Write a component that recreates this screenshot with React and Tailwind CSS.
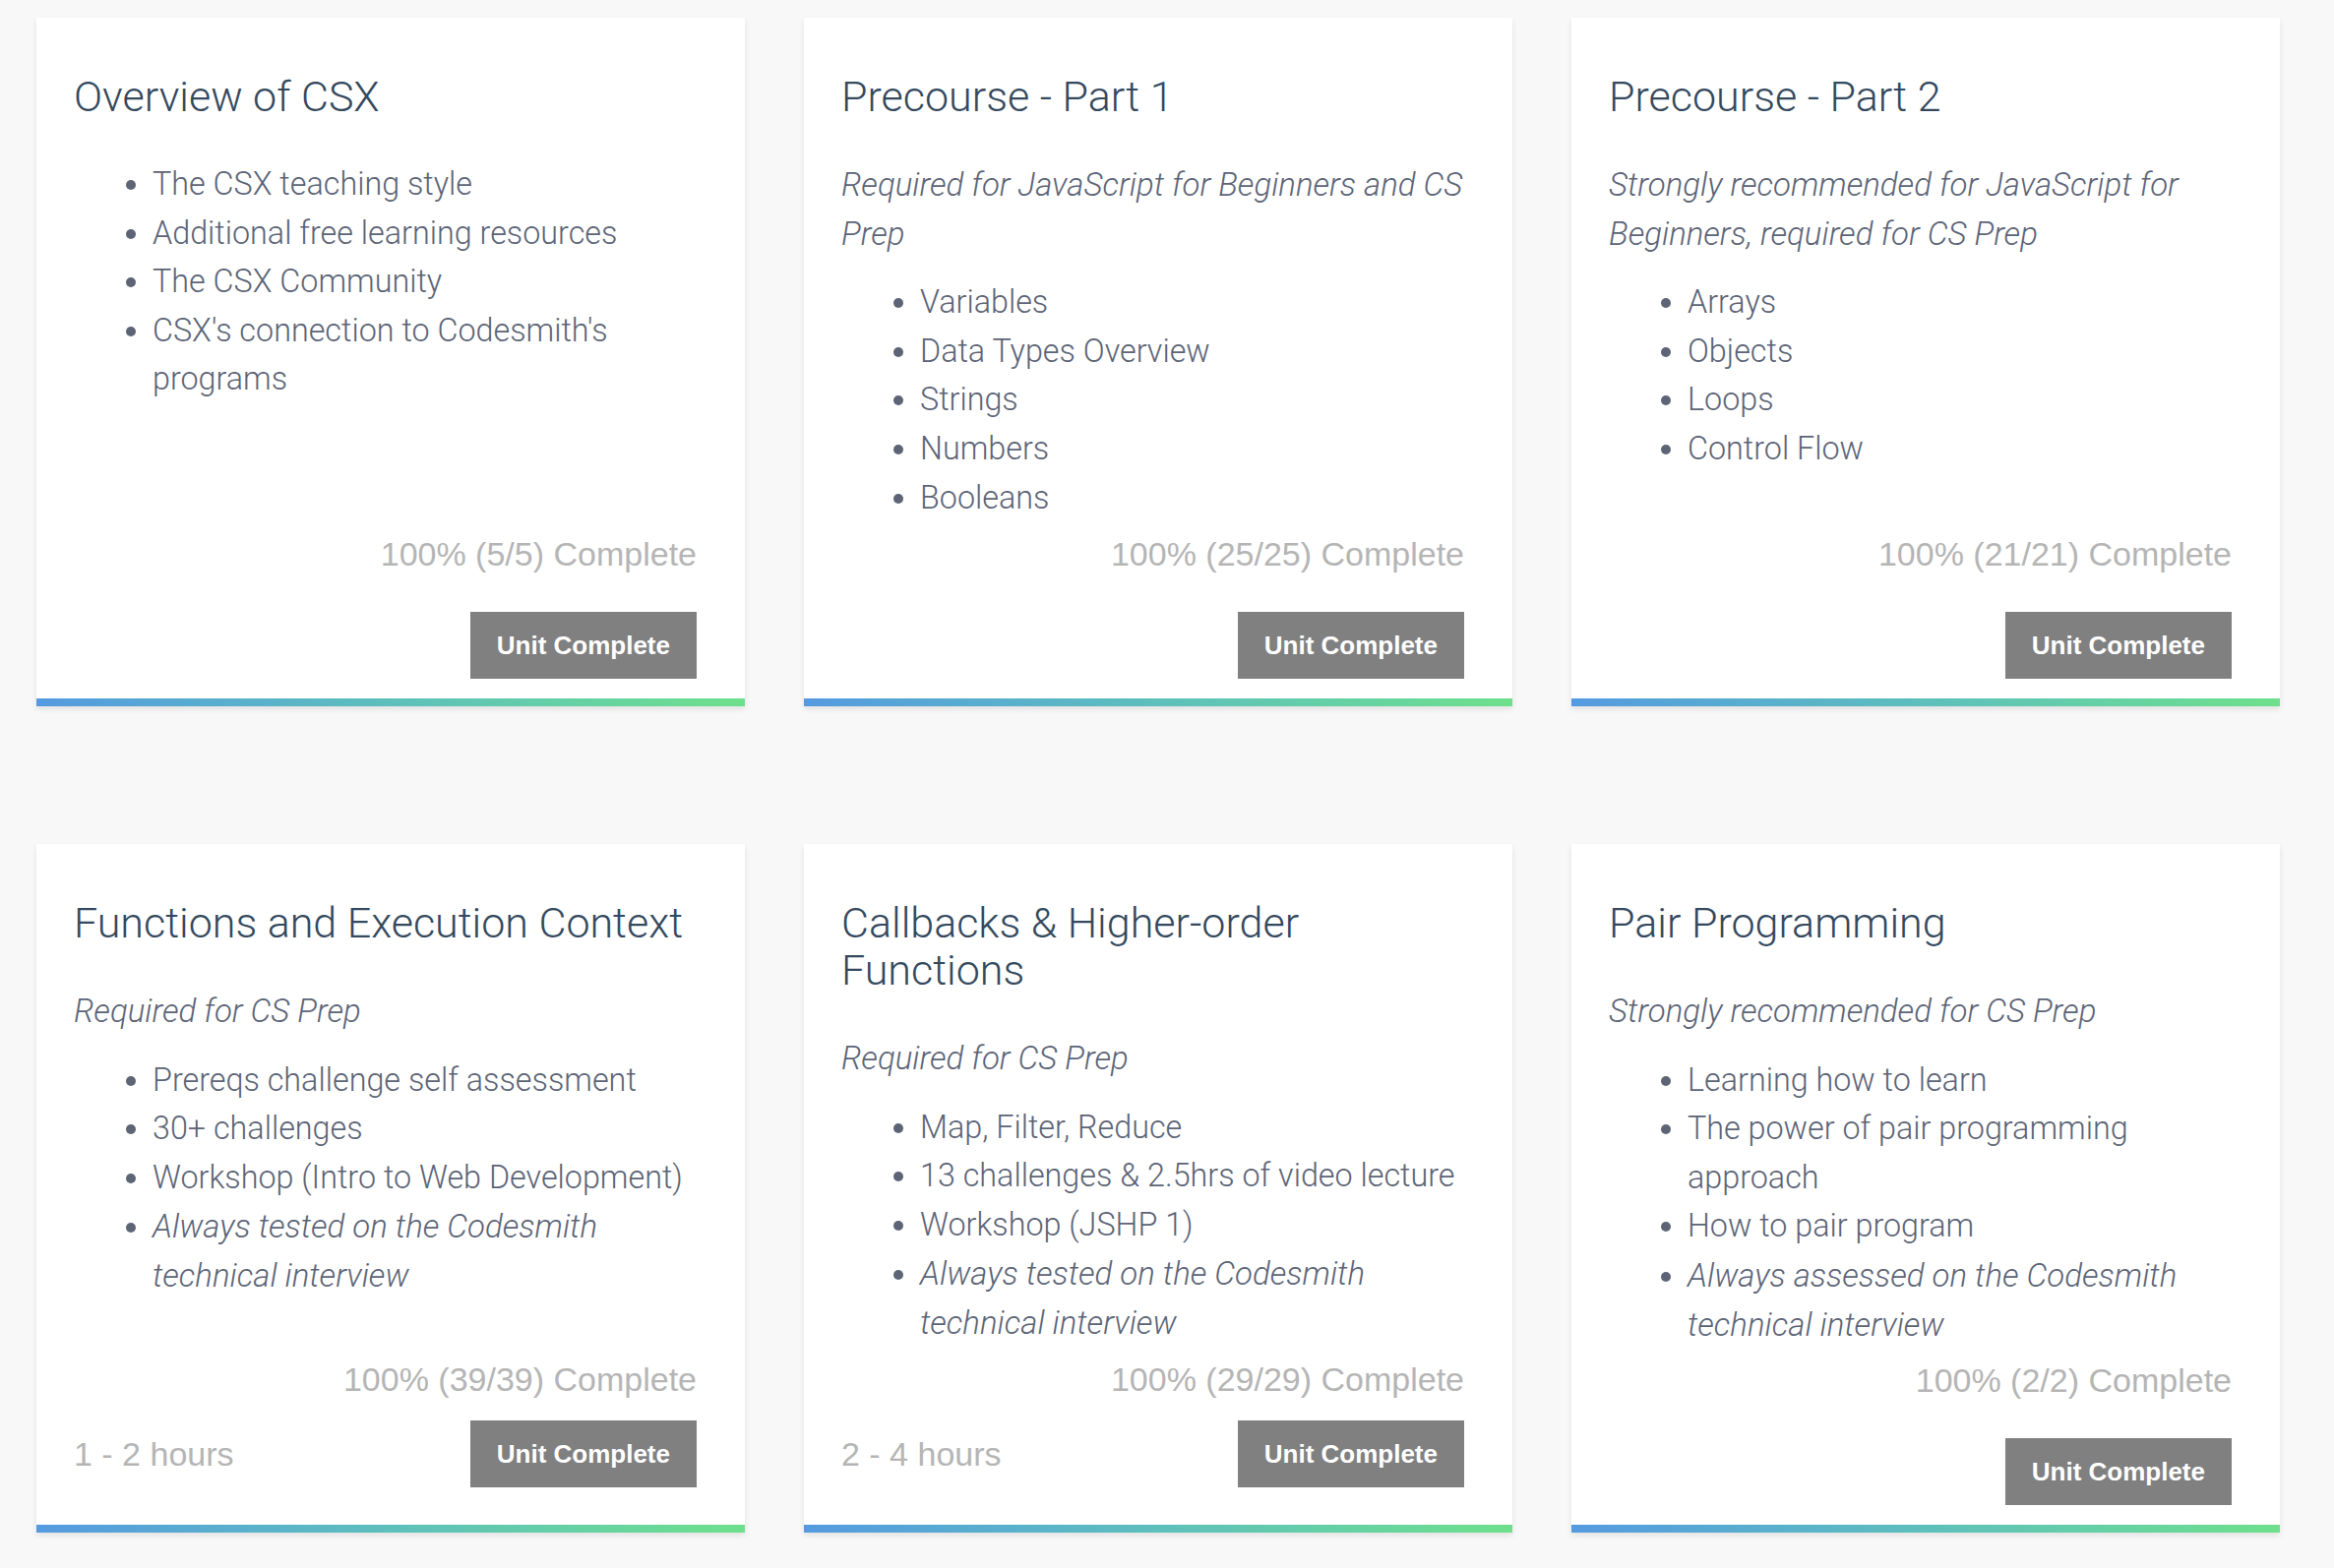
import React from "react";

const cards = [
  {
    title: ["Overview of CSX"],
    items: [
      { t: "The CSX teaching style" },
      { t: "Additional free learning resources" },
      { t: "The CSX Community" },
      { t: "CSX's connection to Codesmith's programs" },
    ],
    progress: "100% (5/5) Complete",
  },
  {
    title: ["Precourse - Part 1"],
    subtitle: "Required for JavaScript for Beginners and CS Prep",
    items: [
      { t: "Variables" },
      { t: "Data Types Overview" },
      { t: "Strings" },
      { t: "Numbers" },
      { t: "Booleans" },
    ],
    progress: "100% (25/25) Complete",
  },
  {
    title: ["Precourse - Part 2"],
    subtitle: "Strongly recommended for JavaScript for Beginners, required for CS Prep",
    items: [{ t: "Arrays" }, { t: "Objects" }, { t: "Loops" }, { t: "Control Flow" }],
    progress: "100% (21/21) Complete",
  },
  {
    title: ["Functions and Execution Context"],
    subtitle: "Required for CS Prep",
    items: [
      { t: "Prereqs challenge self assessment" },
      { t: "30+ challenges" },
      { t: "Workshop (Intro to Web Development)" },
      { t: "Always tested on the Codesmith technical interview", i: true },
    ],
    progress: "100% (39/39) Complete",
    hours: "1 - 2 hours",
  },
  {
    title: ["Callbacks & Higher-order Functions"],
    subtitle: "Required for CS Prep",
    items: [
      { t: "Map, Filter, Reduce" },
      { t: "13 challenges & 2.5hrs of video lecture" },
      { t: "Workshop (JSHP 1)" },
      { t: "Always tested on the Codesmith technical interview", i: true },
    ],
    progress: "100% (29/29) Complete",
    hours: "2 - 4 hours",
  },
  {
    title: ["Pair Programming"],
    subtitle: "Strongly recommended for CS Prep",
    items: [
      { t: "Learning how to learn" },
      { t: "The power of pair programming approach" },
      { t: "How to pair program" },
      { t: "Always assessed on the Codesmith technical interview", i: true },
    ],
    progress: "100% (2/2) Complete",
  },
];

const sans = "font-['Roboto','Liberation_Sans',sans-serif]";
const helv = "font-['Liberation_Sans','Arial',sans-serif]";

function Card({ c }) {
  return (
    <div className="h-[700px] bg-white flex flex-col shadow-[0_3px_6px_rgba(0,0,0,0.09)]">
      <div className={`flex-1 flex flex-col pt-[56px] px-[38px] ${sans}`}>
        <h2 className="text-[43px] leading-[48px] font-light text-[#34495e] mb-[41px]">
          {c.title}
        </h2>
        {c.subtitle && (
          <p className="text-[33px] leading-[49.6px] italic font-light text-[#5c6476] mb-[21px]">
            {c.subtitle}
          </p>
        )}
        <ul className="list-disc pl-[80px] text-[32.3px] leading-[49.6px] font-light text-[#5c6476]">
          {c.items.map((it, k) => (
            <li key={k} className={it.i ? "italic text-[33px]" : ""}>
              {it.t}
            </li>
          ))}
        </ul>
      </div>
      <div className={`pl-[38px] pr-[49px] ${helv}`}>
        <div className="text-right text-[34px] leading-[40px] text-[#b5b5b5]">{c.progress}</div>
        {c.hours ? (
          <div className="flex items-center justify-between mt-[22px] mb-[38px]">
            <span className="text-[34px] leading-[40px] text-[#b5b5b5]">{c.hours}</span>
            <button className="h-[68px] px-[27px] bg-[#808080] text-white font-bold text-[26px]">
              Unit Complete
            </button>
          </div>
        ) : (
          <div className="flex justify-end mt-[39px] mb-[20px]">
            <button className="h-[68px] px-[27px] bg-[#808080] text-white font-bold text-[26px]">
              Unit Complete
            </button>
          </div>
        )}
      </div>
      <div className="h-[8px] bg-gradient-to-r from-[#559ae0] to-[#6ee08a]" />
    </div>
  );
}

export default function App() {
  return (
    <div className="min-h-screen bg-[#f8f8f8] pt-[18px] pl-[37px]">
      <div className="grid grid-cols-[720px_720px_720px] gap-x-[60px] gap-y-[140px]">
        {cards.map((c, i) => (
          <Card key={i} c={c} />
        ))}
      </div>
    </div>
  );
}
